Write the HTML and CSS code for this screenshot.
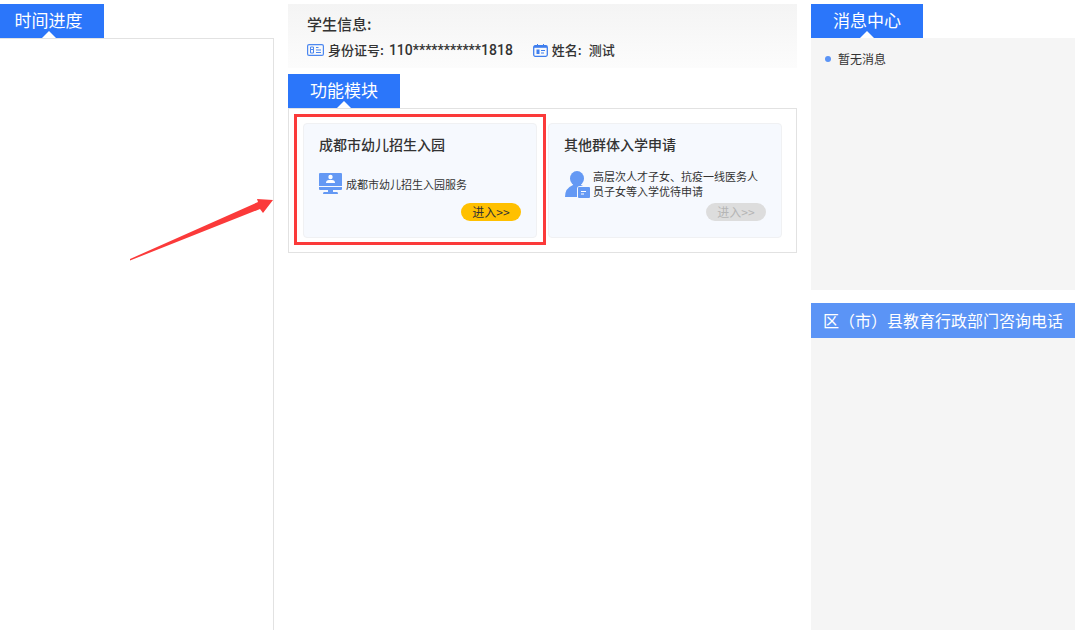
FILE: index.html
```html
<!DOCTYPE html>
<html lang="zh-CN">
<head>
    <meta charset="UTF-8">
    <meta name="viewport" content="width=device-width, initial-scale=1.0">
    <title>成都市幼儿招生入园</title>
    <link rel="stylesheet" href="styles.css">
</head>
<body>
    <div class="page">
        <section class="column progress">
            <h2 class="tab tab-progress">时间进度</h2>
            <div class="progress-box"></div>
            <svg class="pointer" width="146" height="64" viewBox="0 0 146 64">
                <path d="M0 62L128 5L127 2L143 3L133 16L130 12L0 63.500Z" fill="#fb3a3a"/>
            </svg>
        </section>

        <main class="column">
            <section class="student">
                <h3>学生信息:</h3>
                <div class="student-row">
                    <svg width="17" height="12" viewBox="0 0 17 12" fill="none" stroke="#4b87f0">
                        <rect x=".6" y=".6" width="15.8" height="10.8" rx="1.5" stroke-width="1.2"/>
                        <path d="M3.500 3H6.500V5.500H3.500ZM3.500 5.500H6.500V9H3.500ZM9 3.500H11.500M9 6H14M9 8.500H14"/>
                    </svg>
                    <span>身份证号:</span>
                    <span class="value number">110***********1818</span>
                    <svg class="name-icon" width="15" height="13" viewBox="0 0 15 13" fill="none" stroke="#3f7eee">
                        <rect x=".7" y="1.7" width="13.6" height="10.6" rx="1.5" stroke-width="1.3"/>
                        <path d="M1 2.8H14" stroke-width="2"/>
                        <path d="M4.5 0V2M10.5 0V2M8 6.5H12M8 9H11"/>
                        <path d="M3.5 5.5H6.5V10H3.5Z" fill="#3f7eee" stroke="none"/>
                    </svg>
                    <span>姓名:</span>
                    <span class="value">测试</span>
                </div>
            </section>

            <section>
                <h2 class="tab">功能模块</h2>
                <div class="modules">
                    <article class="card active">
                        <h3>成都市幼儿招生入园</h3>
                        <div class="card-desc">
                            <svg width="24" height="22" viewBox="0 0 24 22" fill="#6499f4">
                                <path d="M1 0H22Q23 0 23 1V13H0V1Q0 0 1 0ZM0 14H23V16Q23 17 22 17H14V19H18Q19 19 19 21H4Q4 19 5 19H9V17H1Q0 17 0 16Z"/>
                                <circle cx="11.500" cy="4" r="2.200" fill="#fff"/>
                                <path d="M7 10Q7 7 10 7H13Q16 7 16 10Z" fill="#fff"/>
                            </svg>
                            <p>成都市幼儿招生入园服务</p>
                        </div>
                        <button type="button" class="enter">进入&gt;&gt;</button>
                    </article>
                    <article class="card">
                        <h3>其他群体入学申请</h3>
                        <div class="card-desc">
                            <svg width="26" height="27" viewBox="0 0 26 27" fill="#6499f4">
                                <ellipse cx="13" cy="7.500" rx="7" ry="7.500"/>
                                <path d="M9 12H17V14L19 15H16Q13 15 13 18V26H1Q1 17 9 14Z"/>
                                <rect x="14" y="16" width="12" height="11" rx="1"/>
                                <path d="M17 20.500H22M17 23H20" stroke="#fff" stroke-width="1.200"/>
                            </svg>
                            <p>高层次人才子女、抗疫一线医务人员子女等入学优待申请</p>
                        </div>
                        <button type="button" class="enter" disabled>进入&gt;&gt;</button>
                    </article>
                </div>
            </section>
        </main>

        <aside class="column">
            <h2 class="tab">消息中心</h2>
            <ul class="messages">
                <li>暂无消息</li>
            </ul>
            <h2 class="phone-title">区（市）县教育行政部门咨询电话</h2>
            <div class="phones"></div>
        </aside>
    </div>
</body>
</html>
```
FILE: styles.css
```css
* {
    box-sizing: border-box;
}

body, h2, h3, p, ul {
    margin: 0;
    padding: 0;
}

body {
    font-family: "Noto Sans CJK SC", sans-serif;
    color: #333;
    background: #fff;
}

svg {
    flex-shrink: 0;
}

.page {
    display: grid;
    grid-template-columns: 274px 1fr 264px;
    gap: 14px;
    min-height: 100vh;
    padding: 4px 5px 0 0;
}

.column {
    display: flex;
    flex-direction: column;
    min-width: 0;
}

/* blue section tabs */
.tab {
    position: relative;
    width: 112px;
    height: 34px;
    line-height: 32px;
    text-align: center;
    font-size: 17px;
    font-weight: 400;
    color: #fff;
    background: #2b76fa;
}

.tab::after {
    content: "";
    position: absolute;
    left: 50%;
    bottom: 0;
    margin-left: -7px;
    border: 7px solid transparent;
    border-top: 0;
    border-bottom-color: #fff;
}

/* left column */
.progress {
    position: relative;
}

.tab-progress {
    width: 104px;
    padding-right: 7px;
}

.tab-progress::after {
    left: 49px;
}

.progress-box {
    flex: 1;
    border: 1px solid #e2e2e2;
    border-width: 1px 1px 0 0;
}

.pointer {
    position: absolute;
    top: 193px;
    left: 130px;
}

/* student info */
.student {
    height: 64px;
    margin-bottom: 6px;
    padding: 8px 19px;
    background: linear-gradient(#f4f4f4, #fcfcfc);
}

.student h3 {
    font-size: 15px;
    line-height: 24px;
    font-weight: 500;
}

.student-row {
    display: flex;
    align-items: center;
    font-size: 13px;
    line-height: 28px;
    font-weight: 500;
}

.student-row svg {
    margin-right: 4px;
}

.student-row .name-icon {
    margin-left: 20px;
}

.value {
    margin-left: 7px;
}

.number {
    margin-left: 5px;
    font-family: Roboto, "Noto Sans CJK SC", sans-serif;
    font-size: 14px;
}

/* modules */
.modules {
    display: grid;
    grid-template-columns: 1fr 1fr;
    gap: 11px;
    padding: 14px;
    border: 1px solid #e2e2e2;
}

.card {
    position: relative;
    display: flex;
    flex-direction: column;
    height: 115px;
    padding: 9px 15px;
    border: 1px solid #f0f1f3;
    border-radius: 4px;
    background: #f6f9fe;
}

.card.active::before {
    content: "";
    position: absolute;
    inset: -10px -10px -8px;
    border: 3px solid #fb3a3a;
    pointer-events: none;
}

.card h3 {
    font-size: 14px;
    line-height: 22px;
    font-weight: 500;
}

.card-desc {
    display: flex;
    align-items: center;
    gap: 3px;
    height: 30px;
    margin: 14px 0 4px;
}

.card-desc p {
    font-size: 11px;
    line-height: 15px;
}

.enter {
    align-self: flex-end;
    width: 60px;
    height: 18px;
    padding: 0;
    border: 0;
    border-radius: 9px;
    font-family: inherit;
    font-size: 12px;
    line-height: 16px;
    color: #333;
    background: #ffc000;
    cursor: pointer;
}

.enter:disabled {
    color: #b5b5b5;
    background: #ddd;
    cursor: default;
}

/* right column */
.messages {
    height: 252px;
    padding: 11px 14px;
    list-style: none;
    background: #f5f5f5;
}

.messages li {
    display: flex;
    align-items: center;
    gap: 7px;
    font-size: 12px;
    line-height: 20px;
}

.messages li::before {
    content: "";
    width: 6px;
    height: 6px;
    border-radius: 50%;
    background: #5b94f6;
}

.phone-title {
    margin-top: 13px;
    line-height: 35px;
    text-align: center;
    white-space: nowrap;
    font-size: 16px;
    font-weight: 400;
    color: #fff;
    background: #5b94f6;
}

.phones {
    flex: 1;
    background: #f5f5f5;
}
```
